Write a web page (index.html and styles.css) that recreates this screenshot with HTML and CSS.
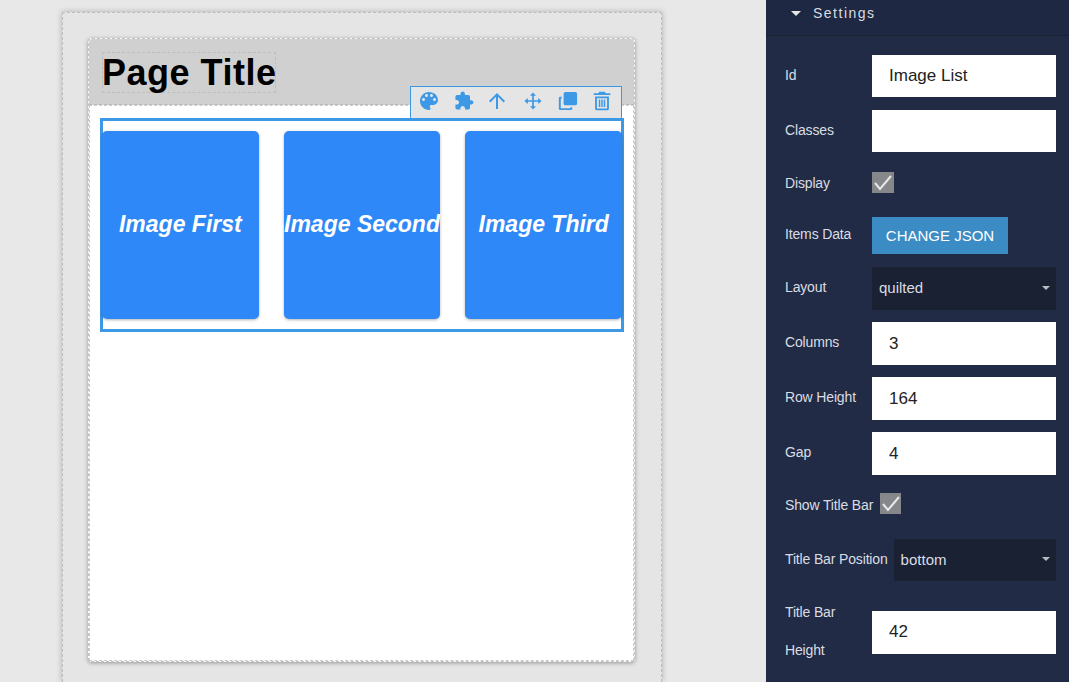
FILE: index.html
```html
<!DOCTYPE html>
<html>
<head>
  <meta charset="UTF-8">
  <title>Page Builder</title>
  <link rel="stylesheet" href="styles.css">
</head>
<body>
<div class="canvas">
  <div class="frame">
    <div class="page">
      <div class="page-head"><h1 class="page-title">Page Title</h1></div>
      <div class="page-body">
        <div class="image-list">
          <div class="toolbar">
            <svg viewBox="0 0 24 24"><path d="M12 3c-4.97 0-9 4.03-9 9s4.03 9 9 9c.83 0 1.5-.67 1.5-1.5 0-.39-.15-.74-.39-1.01-.23-.26-.38-.61-.38-.99 0-.83.67-1.5 1.5-1.5H16c2.76 0 5-2.24 5-5 0-4.42-4.03-8-9-8zm-5.5 9c-.83 0-1.5-.67-1.5-1.5S5.67 9 6.5 9 8 9.67 8 10.5 7.33 12 6.5 12zm3-4C8.67 8 8 7.33 8 6.5S8.67 5 9.5 5s1.5.67 1.5 1.5S10.33 8 9.5 8zm5 0c-.83 0-1.5-.67-1.5-1.5S13.67 5 14.5 5s1.5.67 1.5 1.5S15.33 8 14.5 8zm3 4c-.83 0-1.5-.67-1.5-1.5S16.67 9 17.5 9s1.5.67 1.5 1.5-.67 1.5-1.5 1.5z"/></svg>
            <svg viewBox="-2 -2 28 28"><path d="M20.5 11H19V7c0-1.1-.9-2-2-2h-4V3.5C13 2.12 11.88 1 10.5 1S8 2.12 8 3.5V5H4c-1.1 0-1.99.9-1.99 2v3.8H3.5c1.49 0 2.7 1.21 2.7 2.7s-1.21 2.7-2.7 2.7H2V20c0 1.1.9 2 2 2h3.8v-1.5c0-1.49 1.21-2.7 2.7-2.7 1.49 0 2.7 1.21 2.7 2.7V22H17c1.1 0 2-.9 2-2v-4h1.5c1.38 0 2.5-1.12 2.5-2.5S21.88 11 20.5 11z"/></svg>
            <svg viewBox="1 0 24 24"><path d="M4 12l1.41 1.41L11 7.83V20h2V7.83l5.58 5.59L20 12l-8-8-8 8z"/></svg>
            <svg viewBox="-2 -2 28 28"><path d="M12 2l3.500 4H13v5h5V8.500l4 3.500-4 3.500V13h-5v5h2.500L12 22l-3.500-4H11v-5H6v2.500L2 12l4-3.500V11h5V6H8.500z"/></svg>
            <svg viewBox="-1.500 -.5 25 25"><path d="M9.500 2.500h10a2 2 0 0 1 2 2v10a2 2 0 0 1-2 2h-10a2 2 0 0 1-2-2v-10a2 2 0 0 1 2-2z"/><path d="M5.500 7.500v2h-1v10h10v-1h2v1.500a1.500 1.500 0 0 1-1.500 1.500H4a1.500 1.500 0 0 1-1.500-1.500V9A1.500 1.500 0 0 1 4 7.500z"/></svg>
            <svg viewBox="-1 -1 26 26"><path d="M9 2h6l1 1.500h5v2H3v-2h5zM4.500 7h15v13a2 2 0 0 1-2 2h-11a2 2 0 0 1-2-2zm2 2v11h11V9zm2 1.500h1.600v8H8.500zm2.700 0h1.600v8h-1.600zm2.700 0h1.600v8h-1.600z" fill-rule="evenodd"/></svg>
          </div>
          <div class="card-row">
            <div class="image-card">Image First</div>
            <div class="image-card">Image Second</div>
            <div class="image-card">Image Third</div>
          </div>
        </div>
      </div>
    </div>
  </div>
</div>
<div class="sidebar">
  <div class="side-head"><span class="caret"></span>Settings</div>
  <div class="fields">
    <div class="row row-id"><label>Id</label><input class="field" type="text" value="Image List"></div>
    <div class="row row-classes"><label>Classes</label><input class="field" type="text"></div>
    <div class="row row-display"><label>Display</label><span class="check check-wide"><svg viewBox="0 0 21 21"><path d="M3 11l5 6L19 4"/></svg></span></div>
    <div class="row row-items"><label>Items Data</label><button class="json-btn">CHANGE JSON</button></div>
    <div class="row row-layout"><label>Layout</label><div class="select">quilted<span class="select-caret"></span></div></div>
    <div class="row row-num"><label>Columns</label><input class="field" type="text" value="3"></div>
    <div class="row row-num"><label>Row Height</label><input class="field" type="text" value="164"></div>
    <div class="row row-num"><label>Gap</label><input class="field" type="text" value="4"></div>
    <div class="row row-show"><label class="auto">Show Title Bar</label><span class="check"><svg viewBox="0 0 21 21"><path d="M3 11l5 6L19 4"/></svg></span></div>
    <div class="row row-pos"><label class="auto">Title Bar Position</label><div class="select">bottom<span class="select-caret"></span></div></div>
    <div class="row row-height"><label class="tall">Title Bar Height</label><input class="field" type="text" value="42"></div>
  </div>
</div>
</body>
</html>
```

FILE: styles.css
```css
*{box-sizing:border-box;}
html,body{margin:0;padding:0;height:682px;overflow:hidden;}
body{
  display:flex;
  background:#e8e8e8;
  font-family:"Liberation Sans",Arial,sans-serif;
}

/* canvas */
.canvas{flex:1;padding:12px 0 0 62px;min-width:0;}
.frame{
  width:600px;
  height:670px;
  padding:25px 25px 0;
  background:#e5e5e5;
  border:1px dashed #bdbdbd;
  border-bottom:none;
  box-shadow:0 0 6px rgba(0,0,0,.25);
}
.page{
  display:flex;
  flex-direction:column;
  width:547px;
  height:624px;
  background:#fff;
  border:1px dashed #c4c4c4;
  border-radius:4px;
  box-shadow:0 1px 4px rgba(0,0,0,.35);
}
.page-head{height:66px;padding:13px 13px 0;background:#d0d0d0;border-bottom:1px dashed #bbb;border-radius:4px 4px 0 0;}
.page-title{
  display:inline-block;
  margin:0;
  height:41px;
  width:174px;
  font-size:36px;
  line-height:40px;
  letter-spacing:.5px;
  text-indent:-1px;
  font-weight:bold;
  color:#000;
  white-space:nowrap;
  border:1px dashed #bdbdbd;
}
.page-body{flex:1;padding:12px 9px 0 10px;border:1px dashed #ccc;}
.image-list{
  position:relative;
  height:214px;
  padding:10px 0 0;
  border:3px solid #3d99e6;
}
.card-row{display:flex;gap:25px;margin:0 -1px;}
.toolbar{
  position:absolute;
  top:-35px;
  right:-1px;
  width:212px;
  height:32px;
  display:flex;
  align-items:center;
  justify-content:space-between;
  padding:0 7px 3px 6px;
  background:#e5e5e5;
  border:1px solid #3d99e6;
  border-bottom:none;
}
.toolbar svg{width:24px;height:24px;fill:#3d99e6;}
.image-card{
  flex:1;
  height:188px;
  display:flex;
  align-items:center;
  justify-content:center;
  padding-bottom:2px;
  background:#2e88f7;
  border-radius:5px;
  box-shadow:0 1px 3px rgba(0,0,0,.3);
  color:#fff;
  font-size:23px;
  font-weight:bold;
  font-style:italic;
  white-space:nowrap;
}

/* settings panel */
.sidebar{width:303px;height:682px;flex:none;background:#212b45;color:#d9dde3;}
.side-head{
  height:36px;
  padding:5px 0 0 25px;
  background:#1e2842;
  border-bottom:1px solid #1a2133;
  font-size:14px;
  line-height:17px;
  letter-spacing:1.5px;
}
.caret{
  display:inline-block;
  margin-right:12px;
  vertical-align:2px;
  border-left:5px solid transparent;
  border-right:5px solid transparent;
  border-top:5px solid #e6e6e6;
}
.fields{padding:19px 13px 0 19px;}
.row{display:flex;align-items:center;font-size:14px;letter-spacing:-.15px;}
.row label{width:87px;flex:none;padding-bottom:2px;}
.row label.auto{width:auto;white-space:nowrap;}
.row label.tall{line-height:38px;}
.field{
  flex:1;
  min-width:0;
  height:42px;
  padding:0 17px;
  border:none;
  border-radius:0;
  background:#fff;
  color:#222;
  font:17px "Liberation Sans",Arial,sans-serif;
}
.row-id{margin-bottom:13px;}
.row-classes{margin-bottom:20px;}
.row-display{margin-bottom:24px;}
.row-display label{padding-bottom:0;}
.row-items{margin-bottom:13px;}
.row-items label{padding-bottom:4px;}
.row-layout{margin-bottom:12px;}
.row-layout label{padding-bottom:4px;}
.row-num{margin-bottom:12px;}
.row-num label{padding-bottom:4px;}
.row-num .field{height:43px;}
.row-show{margin-top:18px;margin-bottom:25px;}
.row-show label{margin-right:7px;padding:2px 0 0;}
.row-pos{margin-bottom:12px;height:42px;}
.row-pos label{margin-right:6px;}
.row-height .field{height:43px;}
.check{display:block;width:21px;height:21px;background:#85878a;}
.check-wide{width:22px;}
.check svg{display:block;width:21px;height:21px;fill:none;stroke:#e8e8e8;stroke-width:2;}
.json-btn{
  width:136px;
  height:37px;
  padding:0;
  border:none;
  background:#3b8bc4;
  color:#fff;
  font:15px "Liberation Sans",Arial,sans-serif;
}
.select{
  flex:1;
  height:43px;
  display:flex;
  align-items:center;
  justify-content:space-between;
  padding:0 6px 2px 7px;
  background:#1a2133;
  color:#d9dde3;
  font-size:15px;
  letter-spacing:0;
}
.row-pos .select{height:42px;}
.select-caret{
  border-left:4px solid transparent;
  border-right:4px solid transparent;
  border-top:4px solid #b9bcc2;
}
```
